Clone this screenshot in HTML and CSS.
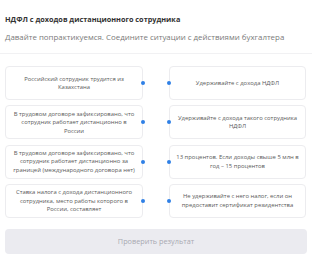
FILE: index.html
```html
<!DOCTYPE html>
<html lang="ru">
<head>
<meta charset="utf-8">
<link rel="stylesheet" href="styles.css">
</head>
<body>
<div class="page">
  <header class="head">
    <h1 class="title">НДФЛ с доходов дистанционного сотрудника</h1>
    <p class="sub">Давайте попрактикуемся. Соедините ситуации с действиями бухгалтера</p>
  </header>
  <div class="sep"></div>
  <div class="grid">
    <div class="card left">Российский сотрудник трудится из Казахстана<span class="dot"></span></div>
    <div class="card right"><span class="dot"></span>Удерживайте с дохода НДФЛ</div>
    <div class="card left">В трудовом договоре зафиксировано, что сотрудник работает дистанционно в России<span class="dot"></span></div>
    <div class="card right"><span class="dot"></span>Удерживайте с дохода такого сотрудника НДФЛ</div>
    <div class="card left">В трудовом договоре зафиксировано, что сотрудник работает дистанционно за границей (международного договора нет)<span class="dot"></span></div>
    <div class="card right"><span class="dot"></span>13 процентов. Если доходы свыше 5 млн в год – 15 процентов</div>
    <div class="card left">Ставка налога с дохода дистанционного сотрудника, место работы которого в России, составляет<span class="dot"></span></div>
    <div class="card right"><span class="dot"></span>Не удерживайте с него налог, если он предоставит сертификат резидентства</div>
  </div>
  <button class="check" type="button">Проверить результат</button>
</div>
</body>
</html>
```

FILE: styles.css
```css
* { box-sizing: border-box; }
html, body { margin: 0; padding: 0; background: #fff; }
body { font-family: "Open Sans", "Liberation Sans", sans-serif; }
.page { width: 312px; height: 266px; padding: 14px 5px 0 5px; }
.head { display: flex; flex-direction: column; gap: 7px; }
.title { margin: 0; font-size: 7.3px; line-height: 10px; font-weight: 700; color: #333; }
.sub { margin: 0; font-size: 7.9px; line-height: 12px; color: #7a7a7a; }
.sep { height: 1px; background: #f1f1f3; margin: 10px -5px 12px; }
.grid {
  display: grid;
  grid-template-columns: 138px 1fr;
  column-gap: 26px;
  grid-auto-rows: 34px;
  row-gap: 5.3px;
  width: 301px;
}
.card {
  position: relative;
  display: flex;
  align-items: center;
  justify-content: center;
  text-align: center;
  border: 1px solid #ececef;
  border-radius: 4px;
  padding: 2px 5px;
  font-size: 5.9px;
  line-height: 8.5px;
  color: #5a5a5a;
}
.dot {
  position: absolute;
  top: 50%;
  width: 4px;
  height: 4px;
  margin-top: -2px;
  border-radius: 50%;
  background: #2f80e6;
}
.left .dot { right: -3px; }
.right .dot { left: -3px; }
.check {
  display: block;
  width: 302px;
  height: 25px;
  margin-top: 11px;
  border: 0;
  border-radius: 4px;
  background: #ebebf0;
  color: #a9a9b0;
  font-family: inherit;
  font-size: 7.3px;
}
```
